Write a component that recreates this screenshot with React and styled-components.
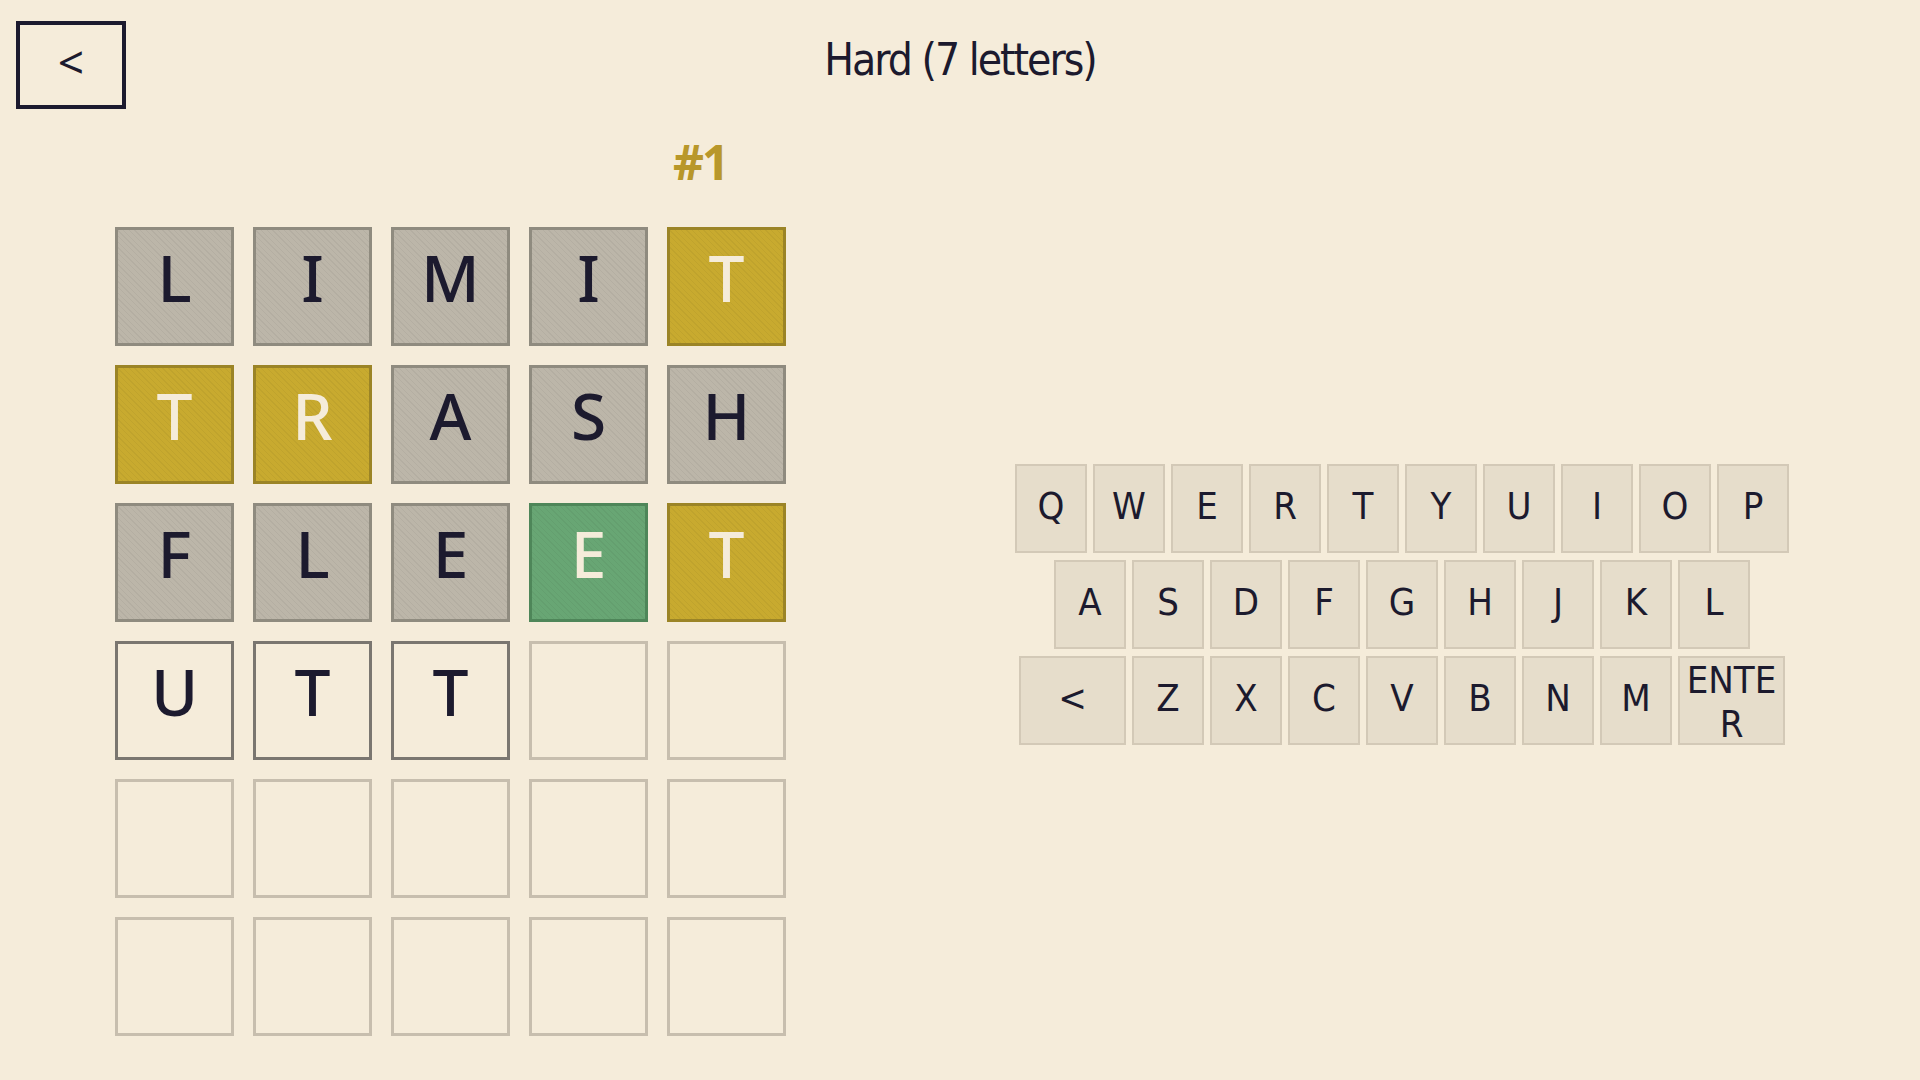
import React from "react";
import styled, { createGlobalStyle } from "styled-components";

const GlobalStyle = createGlobalStyle`
  html, body {
    margin: 0;
    padding: 0;
    background: #f5ecda;
  }
  body {
    font-family: "Noto Sans", sans-serif;
    color: #1c1a2e;
  }
`;

const narrow = `"Liberation Sans Narrow", "DejaVu Sans Condensed", "Roboto Condensed", "Noto Sans", sans-serif`;

const rows = [
  [["L", "gray"], ["I", "gray"], ["M", "gray"], ["I", "gray"], ["T", "gold"]],
  [["T", "gold"], ["R", "gold"], ["A", "gray"], ["S", "gray"], ["H", "gray"]],
  [["F", "gray"], ["L", "gray"], ["E", "gray"], ["E", "green"], ["T", "gold"]],
  [["U", "typed"], ["T", "typed"], ["T", "typed"], ["", "empty"], ["", "empty"]],
  [["", "empty"], ["", "empty"], ["", "empty"], ["", "empty"], ["", "empty"]],
  [["", "empty"], ["", "empty"], ["", "empty"], ["", "empty"], ["", "empty"]],
];

const keyRows = [
  ["Q", "W", "E", "R", "T", "Y", "U", "I", "O", "P"],
  ["A", "S", "D", "F", "G", "H", "J", "K", "L"],
  ["<", "Z", "X", "C", "V", "B", "N", "M", "ENTER"],
];

const tileColors = {
  gray: { bg: "#bcb6a9", border: "#8f8b7f", color: "#1c1a2e" },
  gold: { bg: "#c8aa2f", border: "#9b8426", color: "#f5ecda" },
  green: { bg: "#68a674", border: "#4e8659", color: "#f5ecda" },
  typed: { bg: "#f5ecda", border: "#7a7670", color: "#1c1a2e" },
  empty: { bg: "#f5ecda", border: "#c7beae", color: "#1c1a2e" },
};

const App = () => {
  return (
    <Page>
      <GlobalStyle />
      <Header>
        <BackButton>&lt;</BackButton>
        <Title>Hard (7 letters)</Title>
      </Header>
      <Main>
        <Board>
          <Number>#1</Number>
          <Grid>
            {rows.map((row, r) =>
              row.map(([letter, state], c) => (
                <Tile key={`${r}-${c}`} $state={state}>
                  {letter}
                </Tile>
              ))
            )}
          </Grid>
        </Board>
        <Keyboard>
          {keyRows.map((row, i) => (
            <KeyRow key={i}>
              {row.map((k) => (
                <Key key={k} $wide={k === "<" || k === "ENTER"}>
                  {k}
                </Key>
              ))}
            </KeyRow>
          ))}
        </Keyboard>
      </Main>
    </Page>
  );
};

export default App;

const Page = styled.div`
  width: 1920px;
  min-height: 1080px;
`;

const Header = styled.header`
  display: grid;
  grid-template-columns: 1fr auto 1fr;
  align-items: start;
`;

const BackButton = styled.button`
  justify-self: start;
  margin: 21px 0 0 16px;
  width: 110px;
  height: 88px;
  box-sizing: border-box;
  border: 4px solid #1c1a2e;
  background: transparent;
  color: #1c1a2e;
  font-family: "Noto Sans", sans-serif;
  font-size: 46px;
  line-height: 1;
  padding: 0 0 8px;
  cursor: pointer;
`;

const Title = styled.h1`
  margin: 30px 0 0;
  font-family: ${narrow};
  font-weight: 400;
  font-size: 44px;
  letter-spacing: -2px;
  line-height: 60px;
  color: #1c1a2e;
`;

const Main = styled.main`
  display: flex;
  align-items: flex-start;
  padding-left: 115px;
  gap: 229px;
`;

const Board = styled.section`
  display: flex;
  flex-direction: column;
`;

const Number = styled.div`
  margin: 21px 0 0 558px;
  font-family: "Noto Sans", sans-serif;
  font-weight: 700;
  font-size: 48px;
  line-height: 64px;
  color: #b8972a;
  letter-spacing: -2px;
`;

const Grid = styled.div`
  margin-top: 33px;
  display: grid;
  grid-template-columns: repeat(5, 119px);
  grid-auto-rows: 119px;
  gap: 19px;
`;

const Tile = styled.div`
  box-sizing: border-box;
  display: flex;
  align-items: center;
  justify-content: center;
  padding-bottom: 18px;
  border: 3px solid ${(p) => tileColors[p.$state].border};
  background-color: ${(p) => tileColors[p.$state].bg};
  background-image: ${(p) =>
    p.$state === "typed" || p.$state === "empty"
      ? "none"
      : "repeating-linear-gradient(45deg, rgba(0,0,0,0) 0 3px, rgba(0,0,0,0.045) 3px 4px)"};
  color: ${(p) => tileColors[p.$state].color};
  font-family: "Noto Sans", sans-serif;
  font-weight: 500;
  font-size: 64px;
  line-height: 1;
`;

const Keyboard = styled.section`
  margin-top: 355px;
  display: flex;
  flex-direction: column;
  align-items: center;
  gap: 7px;
  width: 774px;
`;

const KeyRow = styled.div`
  display: flex;
  gap: 6px;
`;

const Key = styled.button`
  box-sizing: border-box;
  width: ${(p) => (p.$wide ? "107px" : "72px")};
  height: 89px;
  padding: 0 6px 6px;
  border: 2px solid #d3c9b7;
  background: #e6ddcb;
  color: #1c1a2e;
  font-family: ${narrow};
  font-size: 38px;
  line-height: 44px;
  word-break: break-all;
  cursor: pointer;
`;
